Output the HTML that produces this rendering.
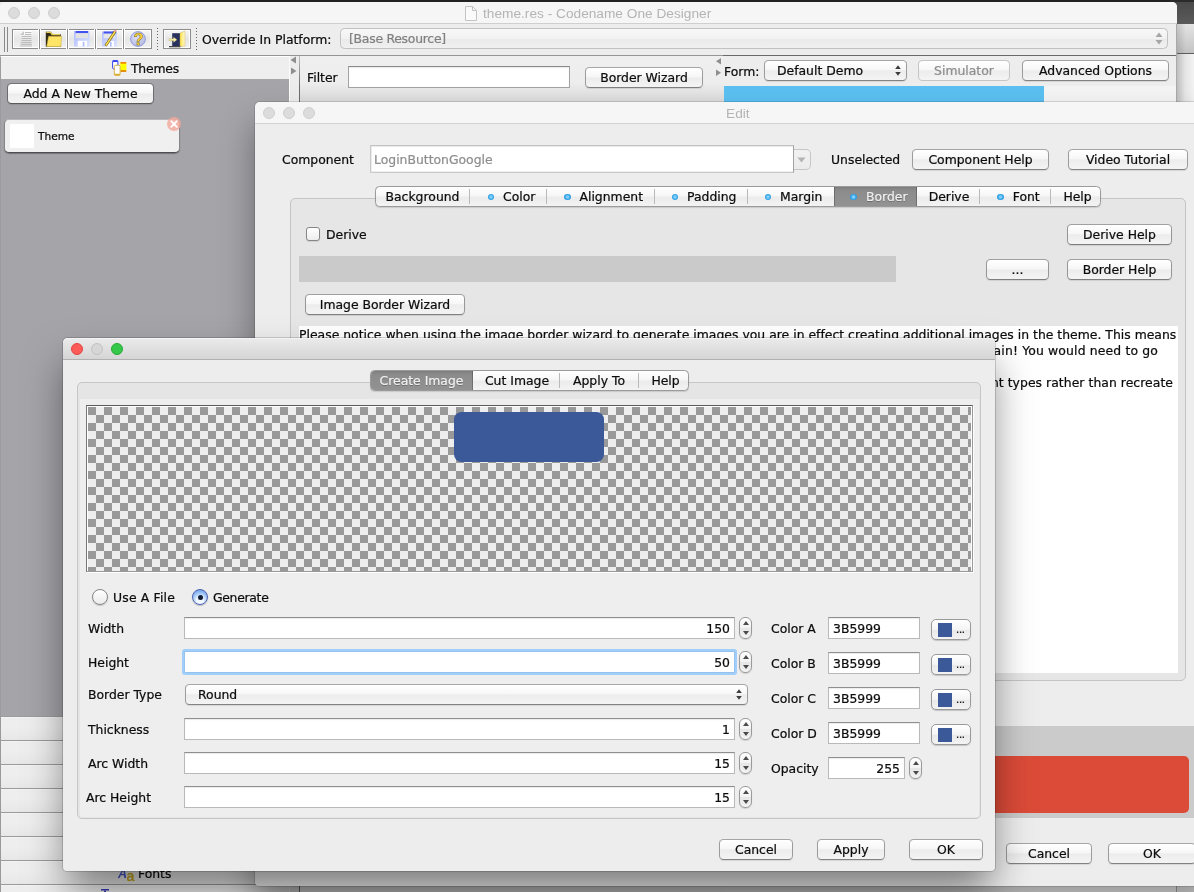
<!DOCTYPE html>
<html>
<head>
<meta charset="utf-8">
<title>theme.res - Codename One Designer</title>
<style>
*{box-sizing:border-box;margin:0;padding:0}
html,body{width:1194px;height:892px;overflow:hidden}
body{position:relative;background:#eaeaea;font-family:"DejaVu Sans","Liberation Sans",sans-serif;font-size:12.4px;color:#0c0c0c;line-height:16px;-webkit-text-stroke:0.22px}
.a{position:absolute}
.layer{position:absolute;left:0;top:0;width:1194px;height:892px;will-change:transform}
.t{position:absolute;white-space:nowrap;line-height:16px;margin-top:1px}
.hv{font-family:"Liberation Sans",sans-serif;font-size:13.7px;color:#b4b4b4;-webkit-text-stroke:0}
.btn{position:absolute;height:21px;border:1px solid rgba(0,0,0,.34);border-top-color:rgba(0,0,0,.3);border-bottom-color:rgba(0,0,0,.45);border-radius:4.5px;background:linear-gradient(#ffffff 0%,#f7f7f7 45%,#ececec 52%,#f4f4f4 100%);background-clip:padding-box;box-shadow:0 1px 1px rgba(0,0,0,.1);text-align:center;line-height:20px;white-space:nowrap}
.btn.dis{color:#8d8d8d;border-color:rgba(0,0,0,.17);box-shadow:none}
.tf{position:absolute;background:#fff;border:1px solid #b9b9b9;border-top-color:#8f8f8f;box-shadow:inset 0 1px 1px rgba(0,0,0,.08);line-height:21px;white-space:nowrap}
.tf.r{text-align:right;padding-right:4px}
.tl{position:absolute;width:12px;height:12px;border-radius:50%;background:#dcdcdc;border:1px solid #cfcfcf}
.win{position:absolute;background:#ededed}
.spin{position:absolute;width:13px;height:22px;border:1px solid #9a9a9a;border-radius:6px;background:linear-gradient(#fff,#f2f2f2 50%,#e6e6e6 52%,#f3f3f3);box-shadow:0 1px 1px rgba(0,0,0,.12)}
.spin:before,.spin:after{content:"";position:absolute;left:2.5px;border-left:3px solid transparent;border-right:3px solid transparent}
.spin:before{top:3px;border-bottom:4px solid #4a4a4a}
.spin:after{bottom:3px;border-top:4px solid #4a4a4a}
.seg{position:absolute;height:21px;border:1px solid #9a9a9a;border-radius:4.5px;background:linear-gradient(#ffffff 0%,#f6f6f6 48%,#ebebeb 52%,#f3f3f3 100%);box-shadow:0 1px 1px rgba(0,0,0,.12);overflow:hidden}
.seg span{position:absolute;top:0;height:19px;line-height:20px;text-align:center;white-space:nowrap}
.seg i{position:absolute;top:2px;width:1px;height:15px;background:#b9b9b9}
.seg .sel{background:linear-gradient(#7e7e7e,#8c8c8c 25%,#8f8f8f 60%,#939393);color:#f0f0f0;top:-1px;height:21px;line-height:22px;box-shadow:inset 0 1px 1px rgba(0,0,0,.3),inset 0 0 0 1px rgba(0,0,0,.2);text-shadow:0 1px 0 rgba(0,0,0,.25)}
.dot{display:inline-block;width:6.5px;height:6.5px;border-radius:50%;background:radial-gradient(circle,#7fcdf7 0 1.2px,#37a8ea 2.2px,#2f9be0 3.3px);vertical-align:1px;margin-left:4px;margin-right:9px}
.cbtn{position:absolute;width:40px;height:21px;border:1px solid #9a9a9a;border-radius:5px;background:linear-gradient(#fff,#f4f4f4 50%,#e9e9e9 52%,#f3f3f3);box-shadow:0 1px 1px rgba(0,0,0,.18)}
.cbtn b{position:absolute;left:6px;top:3px;width:14px;height:14px;background:#3b5999}
.cbtn u{position:absolute;left:24px;top:1px;line-height:17px;text-decoration:none;font-size:10px;letter-spacing:-.3px}
</style>
</head>
<body>

<!-- ================= DESKTOP STRIP (right) ================= -->
<div class="a" style="left:0;top:0;width:1194px;height:2px;background:#222"></div>
<div class="a" style="left:1170px;top:0;width:24px;height:24px;background:linear-gradient(#2a2a2a 0 2px,#4a4a4a 2px,#5a5a5a)"></div>
<div class="a" style="left:1170px;top:24px;width:24px;height:30px;background:linear-gradient(90deg,rgba(0,0,0,.13) 7px,rgba(0,0,0,0) 16px),linear-gradient(#e4e4e4,#c2c2c2)"></div>
<div class="a" style="left:1170px;top:53px;width:24px;height:1px;background:#5c5c5c"></div>
<div class="a" style="left:1170px;top:54px;width:24px;height:50px;background:linear-gradient(90deg,#bdbdbd 7px,#e4e4e4 15px,#f3f3f3)"></div>

<!-- ================= MAIN WINDOW ================= -->
<div id="L1" class="layer">
<div class="win" style="left:0;top:2px;width:1177px;height:890px;border-radius:5px 5px 0 0;background:#ededed"></div>
<!-- title bar -->
<div class="a" style="left:0;top:2px;width:1177px;height:21px;background:#f6f6f6;border-radius:5px 5px 0 0"></div>
<div class="a" style="left:0;top:23px;width:1177px;height:1px;background:#cfcfcf"></div>
<div class="tl" style="left:8px;top:7px"></div>
<div class="tl" style="left:28px;top:7px"></div>
<div class="tl" style="left:48px;top:7px"></div>
<svg class="a" style="left:465px;top:6px" width="12" height="15" viewBox="0 0 12 15"><path d="M.5.5h7l4 4v10H.5z" fill="#fafafa" stroke="#c4c4c4"/><path d="M7.5.5v4h4" fill="none" stroke="#c4c4c4"/></svg>
<div class="t hv" style="left:483px;top:5px">theme.res - Codename One Designer</div>

<!-- toolbar -->
<div class="a" style="left:0;top:24px;width:1177px;height:31px;background:#ededed"></div>
<div class="a" style="left:0;top:55px;width:1177px;height:1px;background:#959595"></div>
<div class="a" style="left:4px;top:27px;width:1px;height:25px;background:#8a8a8a"></div>
<div class="a" style="left:7px;top:27px;width:1px;height:25px;background:#8a8a8a"></div>
<!-- toolbar buttons -->
<div class="a" style="left:12px;top:29px;width:140px;height:20px;border:1px solid #8c8c8c;background:linear-gradient(#f7f7f7,#e6e6e6 50%,#f1f1f1);box-shadow:inset 1px 1px 0 #fff,inset -1px -1px 0 #fff"></div>
<div class="a" style="left:39px;top:29px;width:1px;height:20px;background:#8c8c8c;box-shadow:1px 0 0 #fff,-1px 0 0 #fff"></div>
<div class="a" style="left:67px;top:29px;width:1px;height:20px;background:#8c8c8c;box-shadow:1px 0 0 #fff,-1px 0 0 #fff"></div>
<div class="a" style="left:95px;top:29px;width:1px;height:20px;background:#8c8c8c;box-shadow:1px 0 0 #fff,-1px 0 0 #fff"></div>
<div class="a" style="left:123px;top:29px;width:1px;height:20px;background:#8c8c8c;box-shadow:1px 0 0 #fff,-1px 0 0 #fff"></div>
<div class="a" style="left:163px;top:29px;width:28px;height:20px;border:1px solid #8c8c8c;background:linear-gradient(#f7f7f7,#e6e6e6 50%,#f1f1f1);box-shadow:inset 1px 1px 0 #fff,inset -1px -1px 0 #fff"></div>
<div class="a" style="left:157px;top:28px;width:1px;height:23px;background:repeating-linear-gradient(#666 0 1px,transparent 1px 3px)"></div>
<div class="a" style="left:196px;top:28px;width:1px;height:23px;background:repeating-linear-gradient(#666 0 1px,transparent 1px 3px)"></div>
<!-- icons -->
<svg class="a" style="left:20px;top:31px" width="12" height="16" viewBox="0 0 12 16"><defs><linearGradient id="gd" x1="0" y1="0" x2="0" y2="1"><stop offset="0" stop-color="#fdfdfd"/><stop offset="1" stop-color="#d4d4d4"/></linearGradient></defs><path d="M4 0h8v16H0V4z" fill="url(#gd)"/><path d="M0 4h4V0z" fill="#c9c9c9"/><path d="M5 1.500h6.500M5 3.500h6.500M1.500 5.500h10M1.500 7.500h10M1.500 9.500h10M1.500 11.500h10M1.500 13.500h10" stroke="#bcbcbc" stroke-width="1"/></svg>
<svg class="a" style="left:45px;top:31px" width="17" height="16" viewBox="0 0 17 16"><path d="M.8 15.800V.8h5l1.700 2.500h8.300v12.500z" fill="#2e2a18"/><path d="M1.300 1.300h4.200l1.600 2.400h8" fill="none" stroke="#e6cb4f" stroke-width="1.300"/><path d="M1.600 15.800L3.600 5.200h13L15.800 15.800z" fill="#ffe566" stroke="#bfa23a" stroke-width=".5"/></svg>
<svg class="a" style="left:74px;top:31px" width="16" height="16" viewBox="0 0 16 16"><defs><linearGradient id="gf" x1="0" y1="0" x2="1" y2="1"><stop offset="0" stop-color="#aebcfb"/><stop offset="1" stop-color="#dbe3ff"/></linearGradient></defs><rect x="0" y="0" width="15.500" height="15.500" fill="url(#gf)"/><rect x="1.700" y="0" width="12.300" height="2.200" fill="#4353ee"/><rect x="1.700" y="2.200" width="12.300" height="5" fill="#e3e3e3"/><rect x="3.800" y="9.800" width="9.300" height="5.700" fill="#fff"/><rect x="8.700" y="10.800" width="1.700" height="4.700" fill="#aebcfb"/></svg>
<svg class="a" style="left:102px;top:30px" width="17" height="17" viewBox="0 0 17 17"><rect x="0" y="1.500" width="15" height="15" fill="url(#gf)"/><rect x="1.700" y="1.500" width="11.500" height="2.200" fill="#4353ee"/><rect x="1.700" y="3.700" width="11.500" height="4.500" fill="#e6e6e6"/><rect x="4" y="11" width="8" height="5.500" fill="#fff"/><rect x="8" y="12" width="1.600" height="4.500" fill="#aebcfb"/><path d="M13.300 1.200L3.600 15.800" stroke="#5c4c10" stroke-width="2.600"/><path d="M13.300 1.200L3.800 15.500" stroke="#ffe24a" stroke-width="1.500"/><circle cx="13.600" cy="1" r="1" fill="#f28aa0"/></svg>
<svg class="a" style="left:130px;top:31px" width="16" height="16" viewBox="0 0 16 16"><defs><radialGradient id="gq" cx=".4" cy=".35" r=".7"><stop offset="0" stop-color="#dcdff4"/><stop offset="1" stop-color="#b4b9e2"/></radialGradient></defs><circle cx="8" cy="8" r="7.400" fill="url(#gq)" stroke="#8b93dc" stroke-width=".9"/><text x="8.300" y="13.600" text-anchor="middle" font-family="Liberation Sans,sans-serif" font-weight="bold" font-size="16" fill="#ffd83a" stroke="#7d6c18" stroke-width=".5">?</text></svg>
<svg class="a" style="left:168px;top:30px" width="18" height="18" viewBox="0 0 18 18"><defs><linearGradient id="ge" x1="0" y1="0" x2="1" y2="0"><stop offset="0" stop-color="#ffe24a"/><stop offset="1" stop-color="#fffad0"/></linearGradient></defs><rect x="4.200" y="3.200" width="8" height="13" fill="#27325e"/><path d="M12 3.200l5-2.300V16.200h-5z" fill="url(#ge)" stroke="#c4aa44" stroke-width=".4"/><rect x="1" y="16" width="11.500" height="1.300" fill="#4a4a4a"/><path d="M1 8.700h4.500V7l3.500 2.700L5.500 12.400v-1.700H1z" fill="#f8f0b0" stroke="#9c8a3a" stroke-width=".3"/></svg>
<div class="t" style="left:202px;top:31px">Override In Platform:</div>
<!-- platform combo -->
<div class="a" style="left:340px;top:28px;width:828px;height:21px;border:1px solid #c1c1c1;border-radius:4.500px;background:linear-gradient(#f8f8f8,#f1f1f1 50%,#eaeaea 52%,#f0f0f0)"></div>
<div class="t" style="left:349px;top:30px;color:#808080;letter-spacing:-.25px">[Base Resource]</div>
<svg class="a" style="left:1155px;top:32px" width="8" height="13" viewBox="0 0 8 13"><path d="M4 .5L7.500 5h-7zM4 12.500L7.500 8h-7z" fill="#a6a6a6"/></svg>

<!-- sidebar -->
<div class="a" style="left:0;top:56px;width:290px;height:23px;background:#eeeeee;border-top:1px solid #fff;border-left:1px solid #9c9c9c"></div>
<div class="a" style="left:0;top:79px;width:289px;height:637px;background:#a5a4a9;border-left:1px solid #9c9ca0"></div>
<div class="a" style="left:289px;top:56px;width:1px;height:836px;background:#fafafa"></div>
<!-- themes icon -->
<svg class="a" style="left:112px;top:60px" width="15" height="16" viewBox="0 0 15 16"><rect x=".6" y=".6" width="5.300" height="8.300" rx="1" fill="#fff" stroke="#3344ee" stroke-width="1"/><rect x=".6" y=".3" width="5.300" height="1.600" rx=".6" fill="#3344ee"/><rect x="8.300" y="2.100" width="6.100" height="9.600" rx="1" fill="#ffff00"/><rect x="8.300" y="2.100" width="6.100" height="1.700" rx=".8" fill="#f08a00"/><rect x="8.300" y="10.200" width="6.100" height="1.500" rx=".8" fill="#e06a00"/><rect x="2.300" y="5.300" width="5.800" height="10" rx="1.200" fill="#fff" stroke="#cfa830" stroke-width=".9"/><rect x="2.300" y="13.800" width="5.800" height="1.600" rx=".8" fill="#d8b02a"/></svg>
<div class="t" style="left:131px;top:60px;letter-spacing:-.2px">Themes</div>
<div class="btn" style="left:7px;top:83px;width:147px">Add A New Theme</div>
<!-- theme item -->
<div class="a" style="left:4px;top:119px;width:176px;height:34px;border-radius:5px;background:#f0f0f0;border:1px solid #86868a;border-top-color:#b5b5b8;border-bottom-color:#4e4e52;box-shadow:0 1px 1px rgba(0,0,0,.3)"></div>
<div class="a" style="left:10px;top:124px;width:24px;height:24px;background:#fff"></div>
<div class="t" style="left:38px;top:127px;font-size:10.600px">Theme</div>
<svg class="a" style="left:166px;top:116px" width="16" height="16" viewBox="0 0 16 16"><circle cx="8" cy="8" r="7" fill="#f3a99b" fill-opacity=".8"/><path d="M5.200 5.200l5.600 5.600M10.800 5.200l-5.600 5.600" stroke="#fff" stroke-width="1.800" stroke-linecap="round"/></svg>

<!-- accordion rows -->
<div class="a" style="left:0;top:716px;width:289px;height:176px;border-left:1px solid #9a9a9a;background:repeating-linear-gradient(#9b9b9b 0 1px,#f3f3f3 1px 2px,#eeeeee 2px 12px,#e7e7e7 24px)"></div>
<svg class="a" style="left:117px;top:866px" width="19" height="16" viewBox="0 0 19 16"><text x="1" y="12" font-family="Liberation Sans,sans-serif" font-style="italic" font-weight="bold" font-size="12.500" fill="#4656c8">A</text><text x="9.500" y="14.600" font-family="Liberation Sans,sans-serif" font-size="14" fill="#c9a71c" stroke="#c9a71c" stroke-width=".4">a</text></svg>
<div class="t" style="left:138px;top:865px">Fonts</div>
<svg class="a" style="left:100px;top:889px" width="10" height="3" viewBox="0 0 10 3"><rect x="1" y="0" width="8" height="1.500" fill="#3a3ab8"/><rect x="4" y="1.500" width="2" height="2" fill="#3a3ab8"/></svg>

<!-- divider 1 -->
<div class="a" style="left:290px;top:56px;width:9px;height:836px;background:#ececec"></div>
<svg class="a" style="left:290px;top:56px" width="7" height="20" viewBox="0 0 7 20"><path d="M6 .5v7L.5 4zM1 11.500v7L6.500 15z" fill="#8e8e8e"/></svg>
<div class="a" style="left:299px;top:56px;width:1px;height:836px;background:linear-gradient(#bdbdbd,#6d6d6d 30px)"></div>
<!-- center panel -->
<div class="a" style="left:300px;top:56px;width:424px;height:836px;background:linear-gradient(#efefef,#ededed 27px,#dadada 46px,#f2f2f2 47px)"></div>
<div class="t" style="left:307px;top:69px">Filter</div>
<div class="tf" style="left:348px;top:66px;width:222px;height:22px;border-color:#a3a3a3;border-top-color:#8a8a8a"></div>
<div class="btn" style="left:585px;top:67px;width:118px">Border Wizard</div>
<!-- divider 2 -->
<svg class="a" style="left:715px;top:57px" width="7" height="21" viewBox="0 0 7 21"><path d="M6 1v6.500L1 4.250zM1 12.500v6.500L6 15.750z" fill="#8e8e8e"/></svg>
<!-- right panel -->
<div class="a" style="left:723px;top:55px;width:454px;height:1px;background:#6a6a6a"></div>
<div class="a" style="left:723px;top:56px;width:454px;height:30px;background:#ededed"></div>
<div class="t" style="left:724px;top:63px">Form:</div>
<div class="btn" style="left:764px;top:60px;width:143px;text-align:left;padding-left:12px">Default Demo</div>
<svg class="a" style="left:894px;top:64px" width="8" height="13" viewBox="0 0 8 13"><path d="M4 1.200L6.800 5H1.200zM4 11.800L6.800 8H1.200z" fill="#3c3c3c"/></svg>
<div class="btn dis" style="left:918px;top:60px;width:92px">Simulator</div>
<div class="btn" style="left:1022px;top:60px;width:147px">Advanced Options</div>
<div class="a" style="left:724px;top:86px;width:453px;height:806px;background:#f4f4f4"></div>
<div class="a" style="left:724px;top:86px;width:320px;height:30px;background:#5bc0f1"></div>
<!-- window right edge -->
<div class="a" style="left:1176px;top:24px;width:1px;height:868px;background:#a9a9a9"></div>
<!--L1-->
</div>

<!-- ================= EDIT DIALOG ================= -->
<div id="L2" class="layer">
<div class="win" style="left:255px;top:102px;width:961px;height:784px;border-radius:5px 5px 4px 4px;box-shadow:0 22px 34px 0 rgba(0,0,0,.37),0 0 0 1px rgba(0,0,0,.13)"></div>
<!-- edit title bar -->
<div class="a" style="left:255px;top:102px;width:961px;height:21px;background:#f6f6f6;border-radius:5px 5px 0 0"></div>
<div class="a" style="left:255px;top:123px;width:961px;height:1px;background:#d2d2d2"></div>
<div class="tl" style="left:263px;top:107px"></div>
<div class="tl" style="left:283px;top:107px"></div>
<div class="tl" style="left:303px;top:107px"></div>
<div class="t hv" style="left:726px;top:105px">Edit</div>
<!-- component row -->
<div class="t" style="left:282px;top:151px">Component</div>
<div class="tf" style="left:370px;top:145px;width:424px;height:28px;border-color:#c9c9c9;border-top-color:#c2c2c2;border-right-color:#a2a2a2;color:#8e8e8e;line-height:28px;padding-left:3px;box-shadow:inset 1px 1px 0 #ebebeb,inset 0 -1px 0 #efefef">LoginButtonGoogle</div>
<div class="a" style="left:794px;top:149px;width:17px;height:21px;border:1px solid #c6c6c6;border-left:none;border-radius:0 5px 5px 0;background:linear-gradient(#f1f1f1,#ebebeb)"></div>
<svg class="a" style="left:797px;top:157px" width="9" height="6" viewBox="0 0 9 6"><path d="M.5.5h8L4.500 5.500z" fill="#b3b3b3"/></svg>
<div class="t" style="left:831px;top:151px">Unselected</div>
<div class="btn" style="left:912px;top:149px;width:137px">Component Help</div>
<div class="btn" style="left:1068px;top:149px;width:120px">Video Tutorial</div>
<!-- tab pane -->
<div class="a" style="left:290px;top:198px;width:896px;height:483px;border:1px solid #c4c4c4;border-radius:5px;background:#e6e6e6"></div>
<!-- tabs -->
<div class="seg" style="left:375px;top:186px;width:726px">
<span style="left:0;width:93px">Background</span><i style="left:93px"></i>
<span style="left:94px;width:76px;padding-left:3px"><em class="dot"></em>Color</span><i style="left:170px"></i>
<span style="left:171px;width:107px;padding-left:2px"><em class="dot"></em>Alignment</span><i style="left:278px"></i>
<span style="left:279px;width:92px;padding-left:2px"><em class="dot"></em>Padding</span><i style="left:371px"></i>
<span style="left:372px;width:86px;padding-left:1px"><em class="dot"></em>Margin</span>
<span class="sel" style="left:458px;width:83px;padding-left:3px"><em class="dot"></em>Border</span>
<span style="left:541px;width:62px;padding-left:2px">Derive</span><i style="left:603px"></i>
<span style="left:604px;width:70px;padding-left:3px"><em class="dot"></em>Font</span><i style="left:674px"></i>
<span style="left:675px;width:49px;padding-left:4px">Help</span>
</div>
<!-- derive row -->
<div class="a" style="left:306px;top:227px;width:14px;height:14px;border:1px solid #868686;border-radius:3px;background:linear-gradient(#fff,#ededed);box-shadow:0 1px 1px rgba(0,0,0,.1)"></div>
<div class="t" style="left:326px;top:226px">Derive</div>
<div class="btn" style="left:1067px;top:224px;width:105px">Derive Help</div>
<div class="a" style="left:299px;top:256px;width:597px;height:26px;background:#cacaca"></div>
<div class="btn" style="left:986px;top:259px;width:63px">...</div>
<div class="btn" style="left:1067px;top:259px;width:105px">Border Help</div>
<div class="btn" style="left:305px;top:294px;width:160px">Image Border Wizard</div>
<!-- text area -->
<div class="a" style="left:299px;top:326px;width:879px;height:347px;background:#fff"></div>
<div class="t" style="left:299px;top:326px;letter-spacing:.013px">Please notice when using the image border wizard to generate images you are in effect creating additional images in the theme. This means</div>
<div class="t" style="right:36px;top:342px;letter-spacing:.15px">that the theme file might grow considerably if you run the wizard for the same component again and again! You would need to go</div>
<div class="t" style="right:21px;top:374px;letter-spacing:.05px">It is usually better to derive the border of an existing component from one of the other component types rather than recreate</div>
<!-- lower area -->
<div class="a" style="left:255px;top:726px;width:961px;height:92px;background:#cbcbcb"></div>
<div class="a" style="left:300px;top:756px;width:889px;height:57px;border-radius:5px;background:#dc4b38"></div>
<div class="btn" style="left:1006px;top:843px;width:86px">Cancel</div>
<div class="btn" style="left:1108px;top:843px;width:88px">OK</div>
<!--L2-->
</div>

<!-- ================= WIZARD DIALOG ================= -->
<div id="L3" class="layer">
<div class="win" style="left:63px;top:338px;width:932px;height:533px;border-radius:5px 5px 4px 4px;box-shadow:0 22px 40px -4px rgba(0,0,0,.5),0 0 0 1px rgba(0,0,0,.16)"></div>
<!-- wizard title bar -->
<div class="a" style="left:63px;top:338px;width:932px;height:21px;background:linear-gradient(#ebebeb,#d5d5d5);border-radius:5px 5px 0 0;box-shadow:inset 0 1px 0 #f4f4f4"></div>
<div class="a" style="left:63px;top:359px;width:932px;height:1px;background:#b1b1b1"></div>
<div class="tl" style="left:71px;top:343px;background:#fc5b57;border-color:#e1443f"></div>
<div class="tl" style="left:91px;top:343px;background:#d6d6d6;border-color:#c2c2c2"></div>
<div class="tl" style="left:111px;top:343px;background:#35c84a;border-color:#26a934"></div>
<!-- pane -->
<div class="a" style="left:77px;top:382px;width:904px;height:437px;border:1px solid #c6c6c6;border-radius:5px;background:#e5e5e5"></div>
<div class="a" style="left:80px;top:399px;width:899px;height:418px;background:#eeeeee"></div>
<!-- tabs -->
<div class="seg" style="left:370px;top:370px;width:319px">
<span class="sel" style="left:-1px;width:103px">Create Image</span>
<span style="left:102px;width:86px;padding-left:2px">Cut Image</span><i style="left:188px"></i>
<span style="left:189px;width:78px">Apply To</span><i style="left:267px"></i>
<span style="left:268px;width:49px;padding-left:4px">Help</span>
</div>
<!-- checkerboard -->
<div class="a" style="left:86px;top:405px;width:887px;height:167px;background:#fff;border:1px solid #999;border-top-color:#5a5a5a;border-left-color:#777;box-shadow:1px 1px 0 #fff"></div>
<div class="a" style="left:88px;top:407px;width:883px;height:164px;background-color:#eeeeee;background-image:conic-gradient(#eee 25%,#999 0 50%,#eee 0 75%,#999 0);background-size:16px 16px"></div>
<div class="a" style="left:454px;top:412px;width:150px;height:50px;border-radius:7.500px;background:#3b5999"></div>
<!-- radios -->
<div class="a" style="left:92px;top:589px;width:16px;height:16px;border-radius:50%;border:1px solid #858585;background:linear-gradient(#fff,#ebebeb);box-shadow:0 1px 1px rgba(0,0,0,.18)"></div>
<div class="t" style="left:113px;top:589px;letter-spacing:.18px">Use A File</div>
<div class="a" style="left:192px;top:589px;width:16px;height:16px;border-radius:50%;border:1px solid #4d62b4;background:radial-gradient(circle at 50% 75%,#f2f8ff 0 25%,#a9cdf8 55%,#6e9fe8 85%);box-shadow:0 1px 1px rgba(0,0,0,.22)"></div>
<div class="a" style="left:197.500px;top:594.500px;width:5px;height:5px;border-radius:50%;background:#111c36"></div>
<div class="t" style="left:213px;top:589px;letter-spacing:-.3px">Generate</div>
<!-- left form -->
<div class="t" style="left:88px;top:620px">Width</div>
<div class="tf r" style="left:184px;top:617px;width:551px;height:22px">150</div><div class="spin" style="left:739px;top:617px"></div>
<div class="t" style="left:88px;top:654px">Height</div>
<div class="tf r" style="left:184px;top:651px;width:551px;height:22px;box-shadow:0 0 0 2px #a1cff9;border-color:#93c2ee;border-radius:1px">50</div><div class="spin" style="left:739px;top:651px"></div>
<div class="t" style="left:88px;top:686px">Border Type</div>
<div class="btn" style="left:185px;top:684px;width:563px;text-align:left;padding-left:12px">Round</div>
<svg class="a" style="left:735px;top:688px" width="8" height="13" viewBox="0 0 8 13"><path d="M4 1.200L6.800 5H1.200zM4 11.800L6.800 8H1.200z" fill="#3c3c3c"/></svg>
<div class="t" style="left:88px;top:721px">Thickness</div>
<div class="tf r" style="left:184px;top:718px;width:551px;height:22px">1</div><div class="spin" style="left:739px;top:718px"></div>
<div class="t" style="left:88px;top:755px">Arc Width</div>
<div class="tf r" style="left:184px;top:752px;width:551px;height:22px">15</div><div class="spin" style="left:739px;top:752px"></div>
<div class="t" style="left:86px;top:789px">Arc Height</div>
<div class="tf r" style="left:184px;top:786px;width:551px;height:22px">15</div><div class="spin" style="left:739px;top:786px"></div>
<!-- colors -->
<div class="t" style="left:771px;top:620px">Color A</div>
<div class="tf" style="left:828px;top:617px;width:92px;height:22px;padding-left:4px">3B5999</div><div class="cbtn" style="left:931px;top:619px"><b></b><u>...</u></div>
<div class="t" style="left:771px;top:655px">Color B</div>
<div class="tf" style="left:828px;top:652px;width:92px;height:22px;padding-left:4px">3B5999</div><div class="cbtn" style="left:931px;top:654px"><b></b><u>...</u></div>
<div class="t" style="left:771px;top:690px">Color C</div>
<div class="tf" style="left:828px;top:687px;width:92px;height:22px;padding-left:4px">3B5999</div><div class="cbtn" style="left:931px;top:689px"><b></b><u>...</u></div>
<div class="t" style="left:771px;top:725px">Color D</div>
<div class="tf" style="left:828px;top:722px;width:92px;height:22px;padding-left:4px">3B5999</div><div class="cbtn" style="left:931px;top:724px"><b></b><u>...</u></div>
<div class="t" style="left:771px;top:760px">Opacity</div>
<div class="tf r" style="left:828px;top:757px;width:77px;height:22px">255</div><div class="spin" style="left:909px;top:757px"></div>
<!-- buttons -->
<div class="btn" style="left:719px;top:839px;width:74px">Cancel</div>
<div class="btn" style="left:817px;top:839px;width:68px">Apply</div>
<div class="btn" style="left:909px;top:839px;width:74px">OK</div>
<!--L3-->
</div>

</body>
</html>
